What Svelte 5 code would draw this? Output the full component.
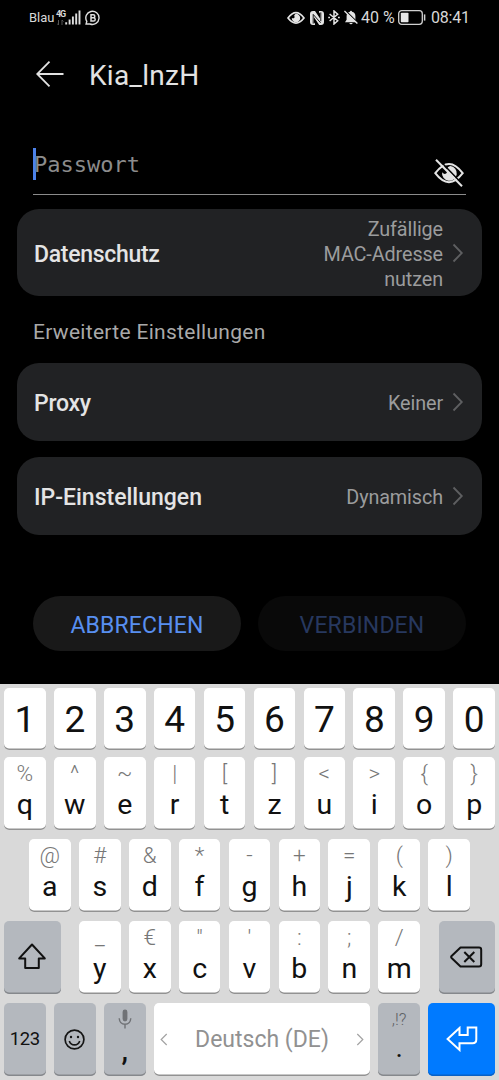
<script>
  let password = '';

  const digits = ['1', '2', '3', '4', '5', '6', '7', '8', '9', '0'];

  // each key: [long press symbol, letter]
  const topRow = [
    ['%', 'q'], ['^', 'w'], ['~', 'e'], ['|', 'r'], ['[', 't'],
    [']', 'z'], ['<', 'u'], ['>', 'i'], ['{', 'o'], ['}', 'p'],
  ];
  const homeRow = [
    ['@', 'a'], ['#', 's'], ['&', 'd'], ['*', 'f'], ['-', 'g'],
    ['+', 'h'], ['=', 'j'], ['(', 'k'], [')', 'l'],
  ];
  const bottomRow = [
    ['_', 'y'], ['€', 'x'], ['"', 'c'], ["'", 'v'], [':', 'b'], [';', 'n'], ['/', 'm'],
  ];
</script>

<main>
  <div class="status">
    <div class="left">
      <span class="carrier">Blau</span>
      <span class="network"><b>4G</b><svg width="7" height="5" viewBox="0 0 7 5"><path d="M1.5 0v5M0 3.5 1.5 5M5 5V0l1.5 1.5" fill="none" stroke="#555" /></svg></span>
      <svg class="signal" width="16" height="15" viewBox="0 0 16 15">
        <path d="M1.2 12.2v2.3M4.6 9.4v5.1M7.9 6.4v8.1M11.2 3.4v11.1M14.5.4v14.1" stroke="#dedede" stroke-width="1.9" />
      </svg>
      <svg class="business" width="16" height="16" viewBox="0 0 16 16">
        <path d="M1.8 11.3A6.6 6.6 0 1 1 5 14H1.1z" fill="none" stroke="#dedede" stroke-width="1.4" />
        <path d="M6 4.8h2.3a1.5 1.5 0 0 1 0 3H6zM6 7.8h2.6a1.6 1.6 0 0 1 0 3.2H6z" fill="none" stroke="#dedede" stroke-width="1.5" />
      </svg>
    </div>
    <div class="right">
      <svg width="18" height="14" viewBox="0 0 18 14">
        <path d="M1 7Q9-3.6 17 7 9 17.2 1 7z" fill="none" stroke="#e4e4e4" stroke-width="1.7" />
        <path d="M8.8 2.8a4.2 4.2 0 1 1-4 4.1q1.8 1 2.6-.2.6-1-.3-2 .7-1.2 1.7-1.9z" fill="#e4e4e4" />
      </svg>
      <svg class="nfc" width="14" height="14" viewBox="0 0 14 14">
        <path d="M3 0h2l5 7.5V2.6L9 1.2V0h2q3 0 3 3v8q0 3-3 3H9.2L4 6.2v5.3l1 1.3V14H3q-3 0-3-3V3q0-3 3-3z" fill="#e4e4e4" />
        <path d="M3.2 12.6V3.4l7.4 8.4M10.8 1.4v8.8" fill="none" stroke="#000" stroke-width=".9" />
      </svg>
      <svg class="bluetooth" width="12" height="15" viewBox="0 0 12 15">
        <path d="m1.6 4 8.1 6.8L6 14V1l3.7 3.3L1.6 11M.2 7.5h1.8M10 7.5h1.8" fill="none" stroke="#e4e4e4" stroke-width="1.5" />
      </svg>
      <svg class="bell" width="14" height="15" viewBox="0 0 14 15">
        <path d="M1 12.2h12L11.4 9.8V6q0-3.4-3.4-4.3a1 1 0 0 0-2 0Q2.6 2.6 2.6 6v3.8zM5.3 13a1.8 1.8 0 0 0 3.4 0z" fill="#e4e4e4" />
        <path d="m1 .2 13 12.6" stroke="#000" stroke-width="1.3" />
        <path d="M.4 1 13.4 13.6" stroke="#e4e4e4" stroke-width="1.4" />
      </svg>
      <span class="percent">40 %</span>
      <svg class="battery" width="28" height="15" viewBox="0 0 28 15">
        <rect x=".7" y=".7" width="23.6" height="13.6" rx="3" fill="none" stroke="#d0d0d0" stroke-width="1.3" />
        <rect x="2.8" y="2.8" width="7.7" height="9.4" rx=".8" fill="#e8e8e8" />
        <path d="M26.6 4.4v6.2" stroke="#d0d0d0" stroke-width="1.5" />
      </svg>
      <span class="clock">08:41</span>
    </div>
  </div>

  <header>
    <svg width="28" height="28" viewBox="0 0 28 28">
      <path d="M27.5 14H1.2M13.5 1.7 1.2 14l12.3 12.3" fill="none" stroke="#e2e2e2" stroke-width="1.8" />
    </svg>
    <h1>Kia_lnzH</h1>
  </header>

  <div class="field">
    <span class="cursor"></span>
    <input type="text" bind:value={password} placeholder="Passwort" />
    <svg width="32" height="30" viewBox="0 0 32 30">
      <path d="M2.3 15.2Q16-3.2 29.7 15.2 16 33.2 2.3 15.2z" fill="none" stroke="#e4e4e4" stroke-width="2" />
      <path d="M17.2 8a7.4 7.4 0 1 1-8.1 6.2q2 2.5 4 1.3 1.8-1.4.3-4Q15 8.4 17.2 8z" fill="#e4e4e4" />
      <path d="m5 .8 25 26" stroke="#000" stroke-width="1.6" />
      <path d="m3 1.8 26 26.4" stroke="#e4e4e4" stroke-width="2" />
    </svg>
  </div>

  <section class="card privacy">
    <span class="label tight">Datenschutz</span>
    <span class="value">Zufällige<br />MAC-Adresse<br />nutzen</span>
    <svg class="chevron" width="12" height="20" viewBox="0 0 12 20"><path d="m1.5 1.5 8.3 8.5-8.3 8.5" /></svg>
  </section>

  <h2>Erweiterte Einstellungen</h2>

  <section class="card">
    <span class="label tight">Proxy</span>
    <span class="value">Keiner</span>
    <svg class="chevron" width="12" height="20" viewBox="0 0 12 20"><path d="m1.5 1.5 8.3 8.5-8.3 8.5" /></svg>
  </section>

  <section class="card">
    <span class="label">IP-Einstellungen</span>
    <span class="value">Dynamisch</span>
    <svg class="chevron" width="12" height="20" viewBox="0 0 12 20"><path d="m1.5 1.5 8.3 8.5-8.3 8.5" /></svg>
  </section>

  <div class="actions">
    <button type="button">ABBRECHEN</button>
    <button type="button" disabled>VERBINDEN</button>
  </div>

  <div class="keyboard">
    <div class="row numbers">
      {#each digits as digit}
        <div class="key digit">{digit}</div>
      {/each}
    </div>
    <div class="row">
      {#each topRow as [hint, letter]}
        <div class="key"><span class="hint">{hint}</span><span class="letter">{letter}</span></div>
      {/each}
    </div>
    <div class="row home">
      {#each homeRow as [hint, letter]}
        <div class="key"><span class="hint">{hint}</span><span class="letter">{letter}</span></div>
      {/each}
    </div>
    <div class="row bottom">
      <div class="key dark wide">
        <svg width="30" height="27" viewBox="0 0 30 27">
          <path d="M15 1.5 2.2 15.4h6V25h13.6v-9.6h6z" fill="none" stroke="#111" stroke-width="2" stroke-linejoin="round" />
        </svg>
      </div>
      <div class="letters">
        {#each bottomRow as [hint, letter]}
          <div class="key"><span class="hint">{hint}</span><span class="letter">{letter}</span></div>
        {/each}
      </div>
      <div class="key dark wide">
        <svg width="33" height="22" viewBox="0 0 33 22">
          <path d="M10.5 1.5H29q2.2 0 2.2 2.2v14.6q0 2.2-2.2 2.2H10.5L1.6 12q-.9-1 0-2z" fill="none" stroke="#111" stroke-width="2" stroke-linejoin="round" />
          <path d="m14.3 6 10 10m0-10-10 10" stroke="#111" stroke-width="2" />
        </svg>
      </div>
    </div>
    <div class="row last">
      <div class="key dark mode">123</div>
      <div class="key dark center">
        <svg width="21" height="21" viewBox="0 0 21 21">
          <circle cx="10.5" cy="10.5" r="9.4" fill="none" stroke="#151515" stroke-width="1.7" />
          <circle cx="7" cy="8" r="1.2" fill="#151515" />
          <circle cx="14" cy="8" r="1.2" fill="#151515" />
          <path d="M5.3 12q1.2 3.9 5.2 3.9t5.2-3.9" fill="none" stroke="#151515" stroke-width="1.6" />
        </svg>
      </div>
      <div class="key dark comma">
        <svg width="14" height="20" viewBox="0 0 14 20">
          <rect x="4.6" y=".5" width="4.8" height="12" rx="2.4" fill="#707276" />
          <path d="M1.2 9.3q.4 5.9 5.8 5.9t5.8-5.9M7 15v4.5" fill="none" stroke="#707276" stroke-width="1.4" />
        </svg>
        <span>,</span>
      </div>
      <div class="key space">
        <svg width="8" height="13" viewBox="0 0 8 13"><path d="M6.7 1 1.2 6.5 6.7 12" /></svg>
        <span>Deutsch (DE)</span>
        <svg width="8" height="13" viewBox="0 0 8 13"><path d="m1.3 1 5.5 5.5L1.3 12" /></svg>
      </div>
      <div class="key dark period"><small>,!?</small><span>.</span></div>
      <div class="key enter">
        <svg width="32" height="26" viewBox="0 0 32 26">
          <path d="M1.6 13 13.5 2v6.9h8.2V1.6h8.6v12q0 3.7-3.7 3.7H13.5v6.6z" fill="none" stroke="#fff" stroke-width="2" />
        </svg>
      </div>
    </div>
  </div>
</main>

<style>
  :global(body) {
    background: #000;
  }

  main {
    display: flex;
    flex-direction: column;
    width: 499px;
    height: 1080px;
    overflow: hidden;
    background: #000;
    color: #e3e3e3;
    font-family: Roboto, 'Noto Sans', sans-serif;
  }

  svg {
    display: block;
    flex: none;
  }

  .status {
    display: flex;
    justify-content: space-between;
    align-items: center;
    height: 35px;
    padding: 0 30px 0 29px;
    color: #d8d8d8;
  }

  .left,
  .right {
    display: flex;
    align-items: center;
  }

  .carrier {
    width: 27px;
    font-size: 13px;
    line-height: 16px;
  }

  .network {
    display: flex;
    flex-direction: column;
    align-items: center;
    gap: 1px;
    width: 9px;
    height: 15px;
  }

  .network b {
    font-size: 9px;
    line-height: 9px;
    letter-spacing: -1.2px;
  }

  .business {
    margin-left: 4px;
  }

  .nfc {
    margin-left: 5px;
  }

  .bluetooth {
    margin-left: 4px;
  }

  .bell {
    margin-left: 4px;
  }

  .percent {
    width: 35px;
    margin-left: 3px;
    font-size: 16px;
    white-space: nowrap;
  }

  .battery {
    margin-left: 2px;
  }

  .clock {
    width: 38px;
    margin-left: 5px;
    font-size: 16px;
    letter-spacing: -0.2px;
  }

  header {
    display: flex;
    align-items: center;
    gap: 25px;
    height: 77px;
    padding-left: 36px;
  }

  h1 {
    margin: 4px 0 0;
    font-size: 28px;
    font-weight: 400;
    line-height: 36px;
    letter-spacing: 0.25px;
  }

  .field {
    display: flex;
    align-items: center;
    height: 60px;
    margin: 22px 33px 0;
    border-bottom: 1px solid #8b8b8b;
  }

  .cursor {
    width: 3px;
    height: 32px;
    margin-right: -3px;
    background: #4c82ea;
  }

  input {
    flex: 1;
    min-width: 0;
    padding: 0 0 0 1px;
    border: 0;
    outline: 0;
    background: none;
    font-family: 'DejaVu Sans Mono', monospace;
    font-size: 22px;
  }

  input::placeholder {
    color: #8c8c8c;
    opacity: 1;
  }

  .field svg {
    margin: 18px 1px 0 0;
  }

  .card {
    display: flex;
    align-items: center;
    box-sizing: border-box;
    flex: none;
    height: 78px;
    margin: 0 17px 16px;
    padding: 3px 18px 0 17px;
    border-radius: 22px;
    background: #212224;
  }

  .card.privacy {
    height: 87px;
    margin-top: 14px;
    margin-bottom: 0;
    padding-top: 4px;
  }

  .label {
    flex: 1;
    color: #e4e4e4;
    font-size: 23px;
    font-weight: 500;
  }

  .tight {
    letter-spacing: -0.3px;
  }

  .value {
    color: #9b9c9d;
    font-size: 19.8px;
    line-height: 25.3px;
    letter-spacing: -0.1px;
    text-align: right;
  }

  .chevron {
    margin: -3px 0 0 9px;
    fill: none;
    stroke: #5e5f61;
    stroke-width: 1.8;
  }

  h2 {
    height: 67px;
    margin: 0 0 0 33px;
    color: #a9a9a9;
    font-size: 21px;
    font-weight: 400;
    line-height: 72px;
    letter-spacing: 0.3px;
  }

  .actions {
    display: flex;
    gap: 17px;
    margin: 45px 33px 33px;
  }

  button {
    flex: 1;
    height: 55px;
    padding: 3px 0 0;
    border: 0;
    border-radius: 28px;
    background: #191919;
    color: #588ff0;
    font-family: inherit;
    font-size: 23px;
    letter-spacing: 0.15px;
  }

  button:disabled {
    background: #090909;
    color: #27385f;
  }

  .keyboard {
    flex: 1;
    display: flex;
    flex-direction: column;
    gap: 9px;
    padding: 4px 4px 0;
    background: #d9d9d9;
    color: #111;
  }

  .row,
  .letters {
    display: grid;
    grid-template-columns: repeat(10, 1fr);
    column-gap: 8.2px;
    height: 73px;
  }

  .numbers {
    height: 60px;
  }

  .home {
    grid-template-columns: repeat(9, 1fr);
    padding: 0 25px;
  }

  .bottom {
    grid-template-columns: 56.5px 341px 56.5px;
    justify-content: space-between;
    column-gap: 0;
  }

  .letters {
    grid-template-columns: repeat(7, 1fr);
  }

  .last {
    grid-template-columns: 41.7px 41.7px 41.7px 216px 41.7px 66.7px;
    justify-content: space-between;
    column-gap: 0;
  }

  .key {
    display: flex;
    flex-direction: column;
    align-items: center;
    box-sizing: border-box;
    min-width: 0;
    border-radius: 5px;
    background: #fff;
    box-shadow: inset 0 -1.5px 0 #929292;
  }

  .digit {
    padding-top: 2px;
    font-size: 37px;
    line-height: 60px;
  }

  .hint {
    height: 32px;
    color: #777;
    font-size: 22.5px;
    font-weight: 300;
    line-height: 32px;
  }

  .letter {
    font-size: 28.5px;
    line-height: 32px;
  }

  .dark {
    background: #b4b8be;
    box-shadow: inset 0 -1.5px 0 #85888c;
  }

  .wide,
  .center,
  .enter,
  .mode {
    justify-content: center;
  }

  .wide,
  .enter {
    padding-bottom: 2px;
  }

  .center {
    padding-bottom: 1px;
  }

  .mode {
    padding-bottom: 1px;
    font-size: 18.5px;
    letter-spacing: -0.4px;
  }

  .comma {
    padding-top: 6px;
  }

  .comma span {
    font-size: 29px;
    font-weight: 500;
    line-height: 43px;
  }

  .space {
    flex-direction: row;
    justify-content: space-between;
    padding: 0 6px 1px;
    color: #919191;
    font-size: 23px;
  }

  .space svg {
    fill: none;
    stroke: #a2a2a2;
    stroke-width: 1.2;
  }

  .period small {
    height: 32px;
    color: #606266;
    font-size: 17px;
    font-weight: 300;
    line-height: 32px;
  }

  .period span {
    font-size: 28px;
    line-height: 26px;
  }

  .enter {
    background: #007aff;
    box-shadow: inset 0 -1.5px 0 #0961c5;
  }
</style>
